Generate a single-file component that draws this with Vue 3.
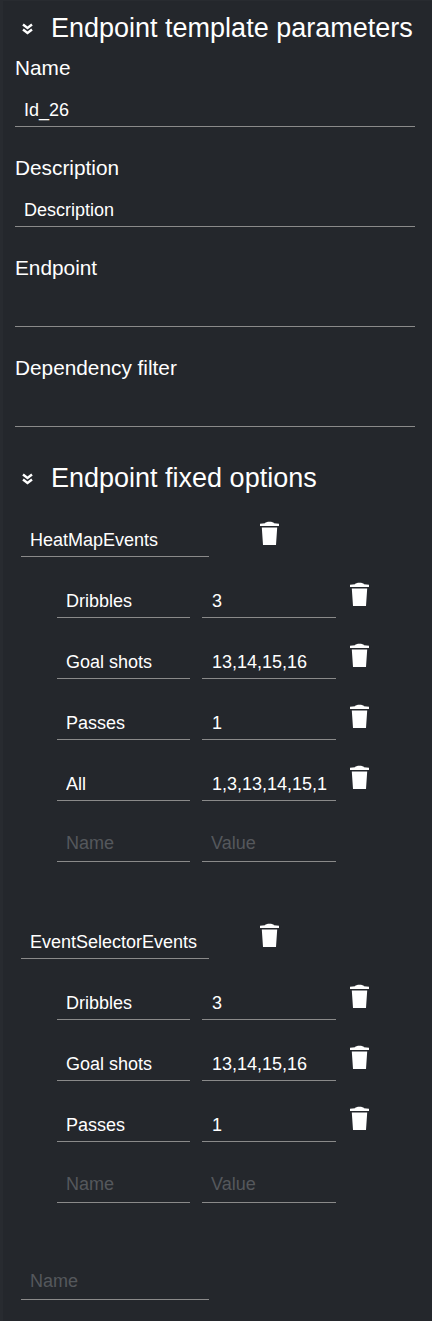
<script setup>
const fields = [
  { label: 'Name', value: 'Id_26' },
  { label: 'Description', value: 'Description' },
  { label: 'Endpoint', value: '' },
  { label: 'Dependency filter', value: '' },
]
const groups = [
  {
    name: 'HeatMapEvents',
    rows: [
      ['Dribbles', '3'],
      ['Goal shots', '13,14,15,16'],
      ['Passes', '1'],
      ['All', '1,3,13,14,15,1'],
    ],
  },
  {
    name: 'EventSelectorEvents',
    rows: [
      ['Dribbles', '3'],
      ['Goal shots', '13,14,15,16'],
      ['Passes', '1'],
    ],
  },
]
</script>

<template>
  <main class="panel">
    <h2 class="heading">
      <svg class="chev" viewBox="0 0 11 12" width="11" height="12"><path d="M1 1.500l4.500 3.500L10 1.500M1 6.500l4.500 3.500L10 6.500" fill="none" stroke="#fff" stroke-width="2.400"/></svg>
      <span>Endpoint template parameters</span>
    </h2>
    <div class="fields">
      <div v-for="f in fields" :key="f.label" class="field">
        <label class="label">{{ f.label }}</label>
        <input class="input wide" :value="f.value" />
      </div>
    </div>
    <h2 class="heading second">
      <svg class="chev" viewBox="0 0 11 12" width="11" height="12"><path d="M1 1.500l4.500 3.500L10 1.500M1 6.500l4.500 3.500L10 6.500" fill="none" stroke="#fff" stroke-width="2.400"/></svg>
      <span>Endpoint fixed options</span>
    </h2>
    <section v-for="g in groups" :key="g.name" class="group">
      <div class="group-head">
        <input class="input group-name" :value="g.name" />
        <svg class="trash" viewBox="0 0 19 24" width="19" height="24"><path d="M5 2.300C5.500.3 13.500.3 14 2.300L19 2.700V5H0V2.700zM1.800 6.500h15.400L16 24H3z" fill="#fff"/></svg>
      </div>
      <div v-for="r in g.rows" :key="r[0]" class="row">
        <input class="input key" :value="r[0]" />
        <input class="input val" :value="r[1]" />
        <svg class="trash" viewBox="0 0 19 24" width="19" height="24"><path d="M5 2.300C5.500.3 13.500.3 14 2.300L19 2.700V5H0V2.700zM1.800 6.500h15.400L16 24H3z" fill="#fff"/></svg>
      </div>
      <div class="row">
        <input class="input key empty" placeholder="Name" />
        <input class="input val empty" placeholder="Value" />
      </div>
    </section>
    <div class="group-head">
      <input class="input group-name empty" placeholder="Name" />
    </div>
  </main>
</template>

<style>
html, body { margin: 0; background: #24272c; }
</style>

<style scoped>
.panel {
  width: 432px;
  height: 1321px;
  box-sizing: border-box;
  overflow: hidden;
  background: #24272c;
  box-shadow: inset 3px 1px 0 #282b30;
  color: #fff;
  font-family: "Liberation Sans", Arial, sans-serif;
  padding: 10px 17px 0 15px;
}
.heading {
  display: flex;
  align-items: center;
  margin: 0;
  height: 36px;
  font-size: 27px;
  font-weight: 400;
  line-height: 36px;
}
.chev { margin: 2px 18px 0 7px; flex: none; }
.fields { display: flex; flex-direction: column; }
.field { height: 100px; display: flex; flex-direction: column; }
.label { font-size: 20.8px; line-height: 24px; margin-top: 10px; }
.input {
  display: block;
  box-sizing: border-box;
  height: 34px;
  border: 0;
  border-bottom: 1px solid #8a8a8a;
  background: transparent;
  color: #fff;
  font: 18px "Liberation Sans", Arial, sans-serif;
  padding: 2px 9px 0;
  outline: none;
}
.input.empty { padding-top: 0; padding-bottom: 2px; }
.input::placeholder { color: #55585c; opacity: 1; }
.wide { width: 400px; margin-top: 13px; }
.second { margin-top: 14px; }
.group { margin-bottom: 36px; }
.group-head {
  display: flex;
  align-items: flex-end;
  height: 61px;
  padding-left: 6px;
}
.group-name { width: 188px; }
.group-head .trash { align-self: flex-start; margin: 25px 0 0 51px; }
.row {
  display: flex;
  align-items: flex-end;
  height: 61px;
  padding-left: 42px;
}
.key { width: 133px; }
.val { width: 134px; margin-left: 12px; padding-left: 10px; }
.val.empty { padding-left: 9px; }
.row .trash { align-self: flex-start; margin: 25px 0 0 14px; }
</style>
